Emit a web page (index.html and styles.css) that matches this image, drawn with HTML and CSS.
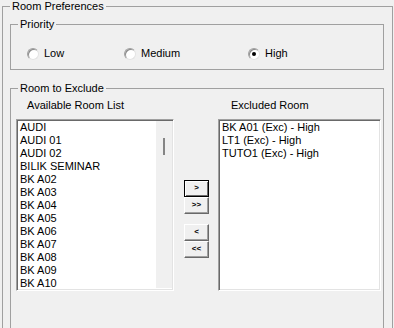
FILE: index.html
```html
<!DOCTYPE html>
<html lang="en">
<head>
    <meta charset="UTF-8">
    <meta name="viewport" content="width=device-width, initial-scale=1.0">
    <title>Room Preferences</title>
    <link rel="stylesheet" href="styles.css">
</head>
<body>
    <fieldset class="group group-outer">
        <legend>Room Preferences</legend>
        <fieldset class="group group-priority">
            <legend>Priority</legend>
            <div class="radio-row">
                <label class="radio"><span class="radio-box"></span>Low</label>
                <label class="radio"><span class="radio-box"></span>Medium</label>
                <label class="radio"><span class="radio-box checked"></span>High</label>
            </div>
        </fieldset>
        <fieldset class="group group-exclude">
            <legend>Room to Exclude</legend>
            <div class="exclude-grid">
                <div class="list-label label-avail">Available Room List</div>
                <div></div>
                <div class="list-label label-excl">Excluded Room</div>

                <div class="listbox listbox-avail">
                    <div class="list-items" id="avail-list"></div>
                    <div class="scrollbar"><div class="thumb"></div></div>
                </div>

                <div class="move-buttons">
                    <button class="btn btn-default">&gt;</button>
                    <button class="btn">&gt;&gt;</button>
                    <button class="btn btn-gap">&lt;</button>
                    <button class="btn">&lt;&lt;</button>
                </div>

                <div class="listbox listbox-excl">
                    <div class="list-items" id="excl-list"></div>
                </div>
            </div>
        </fieldset>
    </fieldset>
    <script>
        const availableRooms = ["AUDI", "AUDI 01", "AUDI 02", "BILIK SEMINAR", "BK A02", "BK A03",
            "BK A04", "BK A05", "BK A06", "BK A07", "BK A08", "BK A09", "BK A10"];
        const excludedRooms = ["BK A01 (Exc) - High", "LT1 (Exc) - High", "TUTO1 (Exc) - High"];

        function fillList(id, items) {
            const list = document.getElementById(id);
            items.forEach(name => {
                const row = document.createElement('div');
                row.className = 'list-item';
                row.textContent = name;
                list.appendChild(row);
            });
        }
        fillList('avail-list', availableRooms);
        fillList('excl-list', excludedRooms);
    </script>
</body>
</html>
```

FILE: styles.css
```css
body {
    margin: 0;
    background-color: #f0f0f0;
    font-family: 'Liberation Sans', Arial, sans-serif;
    font-size: 11px;
    line-height: 13px;
    color: #000;
    overflow: hidden;
    height: 328px;
}
.group {
    border: 1px solid #a0a0a0;
    padding: 0;
    min-inline-size: 0;
}
.group legend {
    margin-left: 7px;
    padding: 0 2px;
    line-height: 13px;
}
.group-outer {
    margin: 0 1px 0 2px;
    padding-top: 5px;
}
.group-priority {
    margin: 0 8px 0 7px;
    padding: 16px 0 9px 0;
}
.group-exclude {
    margin: 12px 8px 0 7px;
    padding: 4px 0 60px 0;
}
.radio-row {
    display: grid;
    grid-template-columns: 97px 124px auto;
    padding-left: 16px;
}
.radio {
    display: flex;
    align-items: center;
    height: 13px;
    gap: 5px;
}
.radio-box {
    width: 12px;
    height: 12px;
    box-sizing: border-box;
    border-radius: 50%;
    border: 1px solid;
    border-color: #a0a0a0 #e3e3e3 #e3e3e3 #a0a0a0;
    box-shadow: inset 1px 1px 0 #8a8a8a;
    background: #fff;
    display: flex;
    align-items: center;
    justify-content: center;
}
.radio-box.checked::after {
    content: '';
    width: 4px;
    height: 4px;
    border-radius: 50%;
    background: #000;
}
.exclude-grid {
    display: grid;
    grid-template-columns: 158px 35px 172px;
    row-gap: 7px;
    padding-left: 5px;
}
.list-label {
    height: 13px;
    white-space: nowrap;
}
.label-avail {
    padding-left: 11px;
}
.label-excl {
    padding-left: 22px;
}
.listbox {
    height: 172px;
    box-sizing: border-box;
    border: 1px solid;
    border-color: #a0a0a0 #fff #fff #a0a0a0;
    padding: 1px;
    box-shadow: inset 1px 1px 0 #696969, inset -1px -1px 0 #e3e3e3;
    background: #fff;
    display: flex;
    overflow: hidden;
}
.listbox-excl {
    margin-left: 9px;
}
.list-items {
    flex: 1;
    min-width: 0;
}
.list-item {
    padding-left: 2px;
    height: 13px;
    white-space: nowrap;
}
.scrollbar {
    width: 16px;
    background: #f0f0f0;
    margin-bottom: 1px;
}
.thumb {
    width: 2px;
    height: 17px;
    margin: 17px 0 0 7px;
    background: #858585;
}
.move-buttons {
    display: flex;
    flex-direction: column;
    margin: 61px 0 0 10px;
    width: 25px;
}
.btn {
    width: 25px;
    height: 17px;
    box-sizing: border-box;
    padding: 0 0 2px 0;
    margin: 0;
    font-family: 'Liberation Sans', Arial, sans-serif;
    font-size: 8px;
    font-weight: bold;
    line-height: 8px;
    color: #000;
    background: #f0f0f0;
    border: 1px solid;
    border-color: #fff #696969 #696969 #fff;
    box-shadow: inset -1px -1px 0 #a0a0a0;
    display: flex;
    align-items: center;
    justify-content: center;
}
.btn-default {
    border-color: #000;
    box-shadow: inset 1px 1px 0 #fff, inset -1px -1px 0 #696969;
}
.btn-gap {
    margin-top: 10px;
}
```
